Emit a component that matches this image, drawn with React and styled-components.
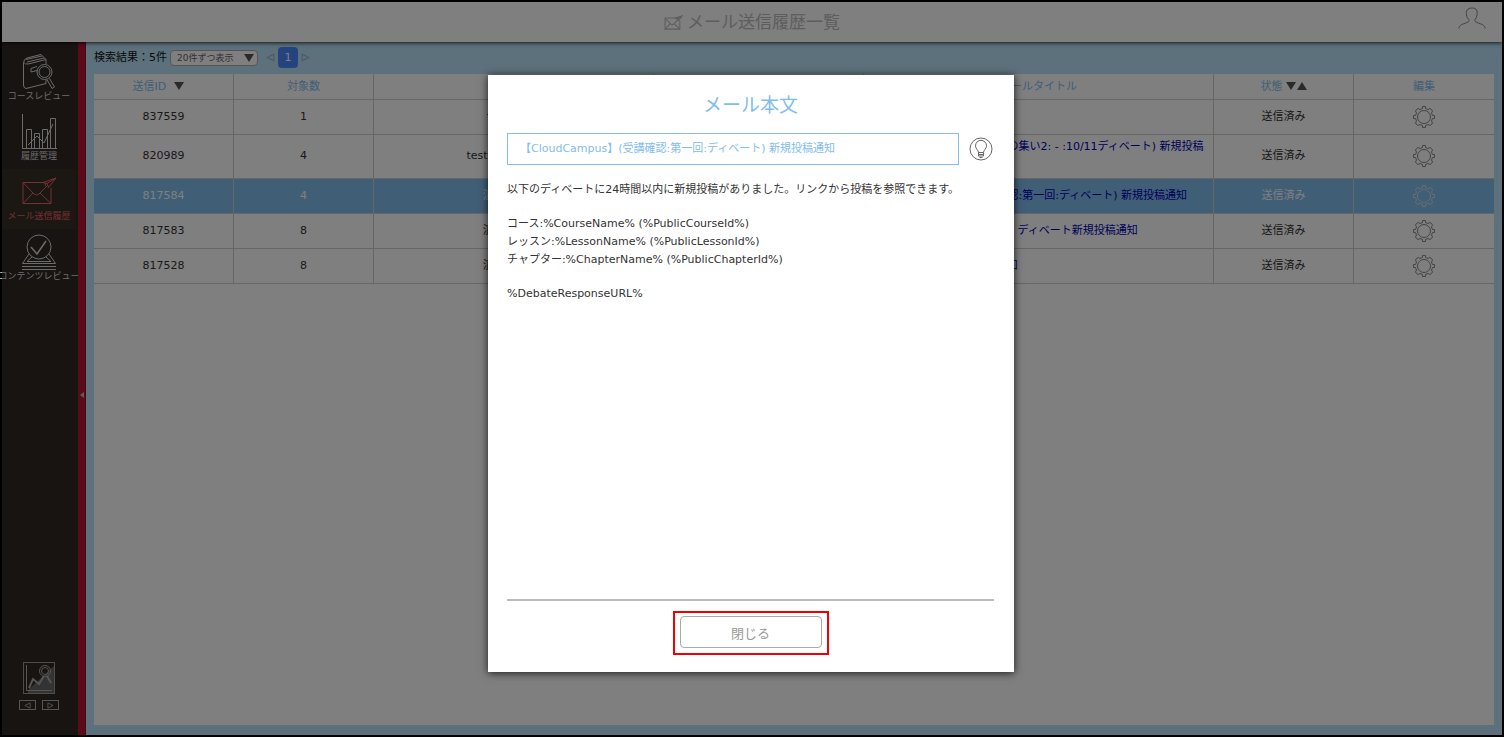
import React from 'react'
import styled, { createGlobalStyle, ThemeProvider } from 'styled-components'

const theme = {
  colors: {
    white: '#ffffff',
    sky: '#b8e2f6',
    blue: '#82bdee',
    line: '#cccccc',
    red: '#b41432',
    dark: '#302825',
    text: '#333333',
    link: '#0000b4',
    pink: '#e8606c',
    pager: '#4a86ff',
  },
  font: '"DejaVu Sans", "Noto Sans CJK JP", sans-serif',
}

const GlobalStyle = createGlobalStyle`
  * { box-sizing: border-box; }
  body { margin: 0; }
  button, input, select { font-family: inherit; }
`

const Page = styled.div`
  position: relative;
  display: flex;
  flex-direction: column;
  min-height: 100vh;
  border: 2px solid #000;
  background: ${({ theme }) => theme.colors.sky};
  color: ${({ theme }) => theme.colors.text};
  font-family: ${({ theme }) => theme.font};
  font-size: 11px;
  line-height: 18px;
`

const Header = styled.header`
  position: relative;
  z-index: 1;
  display: grid;
  grid-template-columns: 1fr auto 1fr;
  align-items: center;
  height: 40px;
  padding: 0 16px;
  background: ${({ theme }) => theme.colors.white};
  box-shadow: 0 1px 4px rgba(0, 0, 0, 0.8);
`

const PageTitle = styled.h1`
  display: flex;
  grid-column: 2;
  align-items: center;
  gap: 4px;
  margin: 0;
  color: #bbb;
  font-size: 17px;
  font-weight: 400;
  line-height: 24px;
`

const IconButton = styled.button`
  display: flex;
  align-items: center;
  justify-content: center;
  padding: 0;
  border: 0;
  background: none;
  color: inherit;
`

const UserButton = styled(IconButton)`
  grid-column: 3;
  justify-self: end;
  color: #888;
  padding-bottom: 8px;
`

const Body = styled.div`
  display: flex;
  flex: 1;
`

const Sidebar = styled.nav`
  display: flex;
  flex-direction: column;
  justify-content: space-between;
  width: 76px;
  padding: 7px 2px 25px 0;
  background: ${({ theme }) => theme.colors.dark};
`

const NavList = styled.div`
  display: flex;
  flex-direction: column;
`

const NavItem = styled.a`
  display: flex;
  flex-direction: column;
  align-items: center;
  height: 60px;
  padding-top: 5px;
  background: ${({ $active }) => ($active ? '#362e26' : 'none')};
  color: ${({ theme, $active }) => ($active ? theme.colors.pink : '#d8d8d8')};
  font-size: 9px;
  line-height: 12px;
  text-decoration: none;
  white-space: nowrap;
`

const NavFooter = styled.div`
  display: flex;
  flex-direction: column;
  align-items: center;
  gap: 6px;
  color: #aaa;
`

const ArrowPair = styled.div`
  display: flex;
  gap: 6px;
`

const SmallArrow = styled(IconButton)`
  width: 17px;
  height: 10px;
  border: 1px solid #aaa;
`

const Handle = styled(IconButton)`
  width: 8px;
  padding-top: 12px;
  background: ${({ theme }) => theme.colors.red};
  border-right: 1px solid #8c1028;
  color: #bbb;
`

const Main = styled.main`
  display: flex;
  flex: 1;
  flex-direction: column;
  min-width: 0;
  padding: 0 8px 10px;
`

const Toolbar = styled.div`
  display: flex;
  align-items: center;
  height: 32px;
  padding-bottom: 1px;
  color: #111;
`

const SelectBox = styled.label`
  position: relative;
  display: flex;
  margin: 0 8px 0 3px;
  color: #555;

  svg {
    position: absolute;
    top: 4px;
    right: 4px;
    pointer-events: none;
  }
`

const PageSize = styled.select`
  width: 88px;
  height: 16px;
  padding: 0 6px;
  appearance: none;
  border: 1px solid #aaa;
  border-radius: 4px;
  background: ${({ theme }) => theme.colors.white};
  color: #666;
  font-size: 9px;
  line-height: 14px;
`

const Pager = styled.div`
  display: flex;
  align-items: center;
  gap: 3px;
  color: #98b4c4;
`

const PageNumber = styled.button`
  width: 20px;
  height: 21px;
  padding: 0;
  border: 0;
  border-radius: 4px;
  background: ${({ theme }) => theme.colors.pager};
  color: ${({ theme }) => theme.colors.white};
  font-size: 11px;
`

const Panel = styled.section`
  flex: 1;
  background: ${({ theme }) => theme.colors.white};
`

const Table = styled.table`
  width: 100%;
  table-layout: fixed;
  border-collapse: separate;
  border-spacing: 0;
`

const Th = styled.th`
  width: ${({ $width }) => $width};
  height: 26px;
  padding: 0 8px;
  border-bottom: 1px solid ${({ theme }) => theme.colors.line};
  border-right: 1px solid ${({ theme }) => theme.colors.line};
  color: ${({ theme }) => theme.colors.blue};
  font-weight: 400;

  &:last-child { border-right: 0; }
  svg { color: #555; vertical-align: middle; }
`

const SortButton = styled.button`
  margin-left: ${({ $gap }) => $gap};
  padding: 0;
  border: 0;
  background: none;
  line-height: 16px;
`

const Row = styled.tr`
  background: ${({ theme, $selected }) => ($selected ? theme.colors.blue : 'none')};
  color: ${({ $selected }) => ($selected ? '#ffffff' : 'inherit')};
`

const Td = styled.td`
  height: 35px;
  padding: 3px 8px 4px;
  border-bottom: 1px solid ${({ theme }) => theme.colors.line};
  border-right: 1px solid ${({ theme }) => theme.colors.line};
  text-align: ${({ $align }) => $align || 'center'};

  &:last-child { border-right: 0; }
`

const MailLink = styled.a`
  color: ${({ theme }) => theme.colors.link};
  text-decoration: none;
  white-space: pre;
`

const GearButton = styled(IconButton)`
  margin: 0 auto;
  color: ${({ $selected }) => ($selected ? '#d0dae4' : '#888')};
`

const Overlay = styled.div`
  position: absolute;
  inset: 0;
  z-index: 2;
  display: flex;
  justify-content: center;
  padding: 73px 2px 63px 0;
  background: rgba(0, 0, 0, 0.5);
`

const Dialog = styled.div`
  display: flex;
  flex-direction: column;
  width: 526px;
  padding: 17px 20px 17px 19px;
  background: ${({ theme }) => theme.colors.white};
  box-shadow: 0 1px 8px rgba(0, 0, 0, 0.8);
`

const DialogTitle = styled.h2`
  margin: 0 0 15px;
  color: ${({ theme }) => theme.colors.blue};
  font-size: 19px;
  font-weight: 400;
  line-height: 26px;
  text-align: center;
`

const SubjectRow = styled.div`
  display: flex;
  align-items: center;
  gap: 10px;
  margin-bottom: 16px;
  padding-right: 1px;
  color: #666;
`

const Subject = styled.input`
  flex: 1;
  height: 32px;
  padding: 0 12px 4px;
  border: 1px solid ${({ theme }) => theme.colors.blue};
  color: ${({ theme }) => theme.colors.blue};
  font-size: 11px;
`

const MailBody = styled.div`
  display: flex;
  flex: 1;
  flex-direction: column;
  gap: 16px;
  border-bottom: 2px solid #bbb;
`

const Paragraph = styled.p`
  margin: 0;
  white-space: pre-line;
`

const Highlight = styled.div`
  display: flex;
  align-self: center;
  margin-top: 10px;
  padding: 3px 5px 5px;
  border: 2px solid #f00000;
`

const CloseButton = styled.button`
  width: 142px;
  height: 32px;
  padding: 0;
  border: 1px solid #aaa;
  border-radius: 4px;
  background: ${({ theme }) => theme.colors.white};
  color: #999;
  font-size: 13px;
`

const Svg = ({ w, h, children, ...rest }) => (
  <svg width={w} height={h} viewBox={`0 0 ${w} ${h}`} fill="none" stroke="currentColor" strokeWidth="1" {...rest}>
    {children}
  </svg>
)

const Triangle = ({ up }) => (
  <Svg w={10} h={8} stroke="none">
    <path d={up ? 'M5 0L10 8H0Z' : 'M0 0H10L5 8Z'} fill="#555" />
  </Svg>
)

const SideTriangle = ({ left, size = 8 }) => (
  <svg width={size} height={size} viewBox="0 0 8 8" fill="none" stroke="currentColor">
    <path d={left ? 'M7 1V7L1 4Z' : 'M1 1V7L7 4Z'} />
  </svg>
)

const GearIcon = () => (
  <Svg w={22} h={22}>
    <path d="M9.500 0.500H12.500V2.500L15 3.500Q17 1.500 18.500 3.500Q20.500 5 18.500 7L19.500 9.500H21.500V12.500H19.500L18.500 15Q20.500 17 18.500 18.500Q17 20.500 15 18.500L12.500 19.500V21.500H9.500V19.500L7 18.500Q5 20.500 3.500 18.500Q1.500 17 3.500 15L2.500 12.500H0.500V9.500H2.500L3.500 7Q1.500 5 3.500 3.500Q5 1.500 7 3.500L9.500 2.500Z" />
    <circle cx="11" cy="11" r="6.500" />
  </Svg>
)

const UserIcon = () => (
  <Svg w={28} h={22}>
    <path d="M1 21.500C1 18 4 17.500 9 15.500C11 14.700 11.500 14 11 12.800C9.500 11.500 8.800 9.500 8.500 8C8 4 9 1 14 1C19 1 19.500 4 19 8C18.700 9.500 18 11.500 17 12.800C16.500 14 17 14.700 19 15.500C24 17.500 27 18 27 21.500" />
  </Svg>
)

const MailIcon = () => (
  <>
    <path d="M23 8.500H2V29.500H30V14" />
    <path d="M2 8.500L13 20Q15.500 22 18 20L26 12M2 29.500L12 19M30 29.500L19 19" />
    <path d="M35 4L22 8.500L26 9.500L27.500 13.500ZM35 4L26 9.500M24 9L24.500 12" />
  </>
)

const CourseIcon = () => (
  <Svg w={36} h={36}>
    <path d="M20 0.500L6 4Q3 5 2.500 8.500V31Q2.500 34 5 34.500L25 29.500V26M3 8.500Q4 10.500 7 10L25 5.500V10M5 5.500L21 2M6 8L23 4M20 0.500L25 5.500" />
    <path d="M16 12.500L10 14.500V18L16 16.500" />
    <circle cx="23.500" cy="18" r="7.500" />
    <circle cx="23.500" cy="18" r="5.500" />
    <path d="M26 25.500L31 34.500L33.500 33L28.500 24.500" />
  </Svg>
)

const ChartIcon = () => (
  <Svg w={36} h={36}>
    <path d="M1.500 0V34.500H36" />
    <path d="M5.500 34V15.500H10.500V34M13.500 34V19.500H18.500V34M21.500 34V15.500H26.500V34M29.500 34V4.500H34.500V34" />
    <path d="M7 31L16 22L23 29L32 10" />
  </Svg>
)

const ContentIcon = () => (
  <Svg w={36} h={36}>
    <circle cx="18" cy="13" r="12" />
    <path d="M10 13L16 20L25 7" strokeWidth="1.500" />
    <path d="M8 20L1.500 29.500H34.500L28 20M11 23L6 27.500H30L25 23M1 32.500H35M1 35.500H35" />
  </Svg>
)

const ReportIcon = () => (
  <Svg w={32} h={32}>
    <path d="M5 28L31 4V31H5Z" fill="#666" stroke="none" />
    <rect x="0.500" y="0.500" width="31" height="31" stroke="#999" />
    <path d="M3.500 3V28.500H29" />
    <path d="M6 26L10 17L16 22L21 14M24 14L28 21" strokeWidth="2" />
    <circle cx="22" cy="9" r="5.500" />
    <circle cx="22" cy="9" r="3.500" />
  </Svg>
)

const BulbIcon = () => (
  <Svg w={24} h={24}>
    <circle cx="12" cy="12" r="11" />
    <path d="M9.500 15.500C9.500 13 6.500 12 6.500 8.800A5.500 5.500 0 0 1 17.500 8.800C17.500 12 14.500 13 14.500 15.500Z" />
    <path d="M9.500 17.500H14.500M9.500 19H14.500M10.500 20.500H13.500M9.500 15.500V19M14.500 15.500V19" />
  </Svg>
)

const navItems = [
  { label: 'コースレビュー', icon: <CourseIcon /> },
  { label: '履歴管理', icon: <ChartIcon /> },
  { label: 'メール送信履歴', icon: <Svg w={36} h={36}><MailIcon /></Svg>, active: true },
  { label: 'コンテンツレビュー', icon: <ContentIcon /> },
]

const subject = '【CloudCampus】(受講確認:第一回:ディベート) 新規投稿通知'

const rows = [
  { id: '837559', count: 1, target: 'テスト授業' },
  { id: '820989', count: 4, target: 'testみんなの集い2', title: '【CloudCampus】(みんなの集い2: - :10/11ディベート) 新規投稿\n通知' },
  { id: '817584', count: 4, target: '演習コース1', title: subject, selected: true },
  { id: '817583', count: 8, target: '演習コース1', title: '【CloudCampus】第1回講: ディベート新規投稿通知' },
  { id: '817528', count: 8, target: '演習コース1', title: '【CloudCampus】 投稿通知' },
]

const App = () => {
  return (
    <ThemeProvider theme={theme}>
      <GlobalStyle />
      <Page lang="ja">
        <Header>
          <PageTitle>
            <svg width="19" height="18" viewBox="0 0 36 32" fill="none" stroke="currentColor" strokeWidth="2"><MailIcon /></svg>
            メール送信履歴一覧
          </PageTitle>
          <UserButton aria-label="ユーザー"><UserIcon /></UserButton>
        </Header>
        <Body>
          <Sidebar>
            <NavList>
              {navItems.map(item => (
                <NavItem key={item.label} href="#" $active={item.active}>
                  {item.icon}
                  <span>{item.label}</span>
                </NavItem>
              ))}
            </NavList>
            <NavFooter>
              <ReportIcon />
              <ArrowPair>
                <SmallArrow aria-label="前へ"><SideTriangle left size={7} /></SmallArrow>
                <SmallArrow aria-label="次へ"><SideTriangle size={7} /></SmallArrow>
              </ArrowPair>
            </NavFooter>
          </Sidebar>
          <Handle aria-label="メニューを閉じる">
            <Svg w={4} h={6} stroke="none"><path d="M4 0V6L0 3Z" fill="currentColor" /></Svg>
          </Handle>
          <Main>
            <Toolbar>
              <span>検索結果：5件</span>
              <SelectBox>
                <PageSize aria-label="表示件数"><option>20件ずつ表示</option></PageSize>
                <Triangle />
              </SelectBox>
              <Pager>
                <IconButton aria-label="前のページ"><SideTriangle left size={9} /></IconButton>
                <PageNumber>1</PageNumber>
                <IconButton aria-label="次のページ"><SideTriangle size={9} /></IconButton>
              </Pager>
            </Toolbar>
            <Panel>
              <Table>
                <thead>
                  <tr>
                    <Th $width="10%">送信ID<SortButton $gap="8px" aria-label="送信IDで並べ替え"><Triangle /></SortButton>&nbsp; &nbsp;</Th>
                    <Th $width="10%">対象数</Th>
                    <Th $width="20%" />
                    <Th $width="15%" />
                    <Th $width="25%">メールタイトル</Th>
                    <Th $width="10%">
                      状態
                      <SortButton $gap="3px" aria-label="降順"><Triangle /></SortButton>
                      <SortButton $gap="1px" aria-label="昇順"><Triangle up /></SortButton>
                    </Th>
                    <Th $width="10%">編集</Th>
                  </tr>
                </thead>
                <tbody>
                  {rows.map(row => (
                    <Row key={row.id} $selected={row.selected}>
                      <Td>{row.id}</Td>
                      <Td>{row.count}</Td>
                      <Td>{row.target}</Td>
                      <Td />
                      <Td $align="left">{row.title && <MailLink href="#">{row.title}</MailLink>}</Td>
                      <Td>送信済み</Td>
                      <Td><GearButton aria-label="編集" $selected={row.selected}><GearIcon /></GearButton></Td>
                    </Row>
                  ))}
                </tbody>
              </Table>
            </Panel>
          </Main>
        </Body>
        <Overlay>
          <Dialog role="dialog" aria-labelledby="mail-title">
            <DialogTitle id="mail-title">メール本文</DialogTitle>
            <SubjectRow>
              <Subject aria-label="件名" readOnly value={subject} />
              <IconButton aria-label="ヒント"><BulbIcon /></IconButton>
            </SubjectRow>
            <MailBody>
              <Paragraph>以下のディベートに24時間以内に新規投稿がありました。リンクから投稿を参照できます。</Paragraph>
              <Paragraph>
                {'コース:%CourseName% (%PublicCourseId%)\nレッスン:%LessonName% (%PublicLessonId%)\nチャプター:%ChapterName% (%PublicChapterId%)'}
              </Paragraph>
              <Paragraph>%DebateResponseURL%</Paragraph>
            </MailBody>
            <Highlight>
              <CloseButton>閉じる</CloseButton>
            </Highlight>
          </Dialog>
        </Overlay>
      </Page>
    </ThemeProvider>
  )
}

export default App
